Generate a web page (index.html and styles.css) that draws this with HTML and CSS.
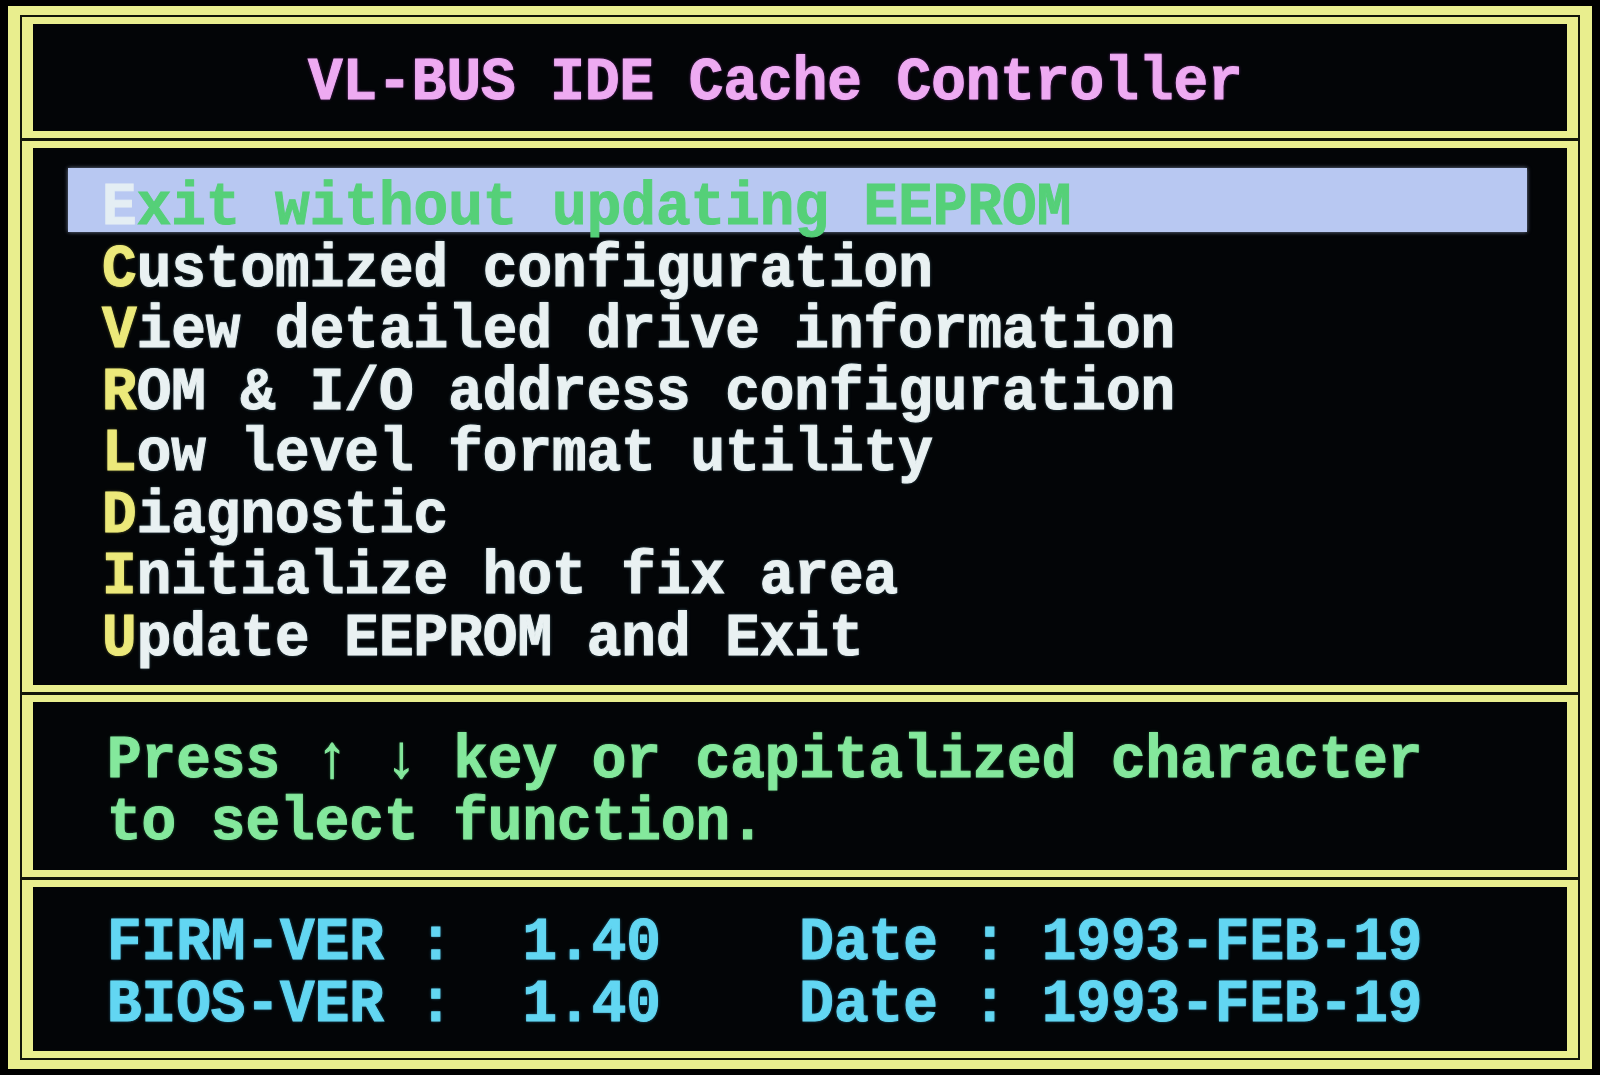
FILE: index.html
```html
<!DOCTYPE html>
<html lang="en">

<head>
    <meta charset="UTF-8">
    <meta name="viewport" content="width=device-width, initial-scale=1.0">
    <title>VL-BUS IDE Cache Controller</title>
    <link rel="stylesheet" href="styles.css">
</head>

<body>
    <div class="screen">
        <section class="panel panel-title">
            <div class="line title"><span class="txt">VL-BUS IDE Cache Controller</span></div>
        </section>

        <section class="panel panel-menu">
            <div class="item selected"><span class="txt"><b>E</b>xit without updating EEPROM</span></div>
            <div class="item"><span class="txt"><b>C</b>ustomized configuration</span></div>
            <div class="item"><span class="txt"><b>V</b>iew detailed drive information</span></div>
            <div class="item"><span class="txt"><b>R</b>OM &amp; I/O address configuration</span></div>
            <div class="item"><span class="txt"><b>L</b>ow level format utility</span></div>
            <div class="item"><span class="txt"><b>D</b>iagnostic</span></div>
            <div class="item"><span class="txt"><b>I</b>nitialize hot fix area</span></div>
            <div class="item"><span class="txt"><b>U</b>pdate EEPROM and Exit</span></div>
        </section>

        <section class="panel panel-help">
            <div class="line"><span class="txt">Press ↑ ↓ key or capitalized character</span></div>
            <div class="line"><span class="txt">to select function.</span></div>
        </section>

        <section class="panel panel-version">
            <div class="line"><span class="txt">FIRM-VER :  1.40    Date : 1993-FEB-19</span></div>
            <div class="line"><span class="txt">BIOS-VER :  1.40    Date : 1993-FEB-19</span></div>
        </section>
    </div>
</body>

</html>
```

FILE: styles.css
```css
:root {
    --frame-color: #e9ee8e;
    --frame-gap: #12160a;
    --screen-bg: #030507;
    --title-color: #eeaaf2;
    --item-color: #e9f1f2;
    --hotkey-color: #ece97a;
    --bar-color: #b8c8f2;
    --bar-text: #55d078;
    --help-color: #84e89c;
    --version-color: #62d6f2;
    --font-family: 'Liberation Mono', 'DejaVu Sans Mono', monospace;
}

html,
body {
    margin: 0;
    padding: 0;
    background-color: #000;
}

body {
    font-family: var(--font-family);
    font-weight: bold;
    font-size: 57.7px;
    height: 1075px;
    overflow: hidden;
}

.screen {
    margin: 6px 8px 5px 8px;
    border-style: solid;
    border-color: var(--frame-color);
    border-width: 9px 12px;
    padding: 2px;
    background-color: var(--frame-gap);
    display: flex;
    flex-direction: column;
    gap: 3px;
}

.panel {
    border-style: solid;
    border-color: var(--frame-color);
    border-width: 7px 11px;
    background-color: var(--screen-bg);
}

.line,
.item {
    height: 61.5px;
    line-height: 61.5px;
    white-space: pre;
}

.txt {
    display: inline-block;
    vertical-align: -5px;
    transform: scaleY(1.05);
    -webkit-text-stroke: 1px currentColor;
}

/* title */
.panel-title {
    height: 107px;
    display: flex;
    align-items: center;
}

.title {
    padding-left: 275px;
    color: var(--title-color);
    text-shadow: 0 0 3px rgba(200, 80, 230, 0.7);
}

/* menu */
.panel-menu {
    height: 516px;
    padding: 21px 40px 0 35px;
}

.item {
    padding-left: 34px;
    color: var(--item-color);
    text-shadow: 0 0 3px rgba(150, 210, 230, 0.6);
}

.item .txt {
    vertical-align: -8px;
}

.item b {
    color: var(--hotkey-color);
    text-shadow: 0 0 3px rgba(220, 220, 90, 0.6);
}

.item.selected {
    background-color: var(--bar-color);
    color: var(--bar-text);
    height: 64px;
    line-height: 64px;
    margin-top: -1px;
    margin-bottom: -1.5px;
    box-shadow: 0 0 4px rgba(190, 210, 255, 0.6);
    text-shadow: none;
}

.item.selected b {
    color: #e4eef4;
    text-shadow: none;
}

/* help */
.panel-help {
    height: 145px;
    padding-top: 23px;
    padding-left: 74px;
    color: var(--help-color);
    text-shadow: 0 0 3px rgba(90, 220, 130, 0.6);
}

/* version */
.panel-version {
    height: 144px;
    padding-top: 20px;
    padding-left: 74px;
    color: var(--version-color);
    text-shadow: 0 0 3px rgba(70, 190, 240, 0.7);
}
```
